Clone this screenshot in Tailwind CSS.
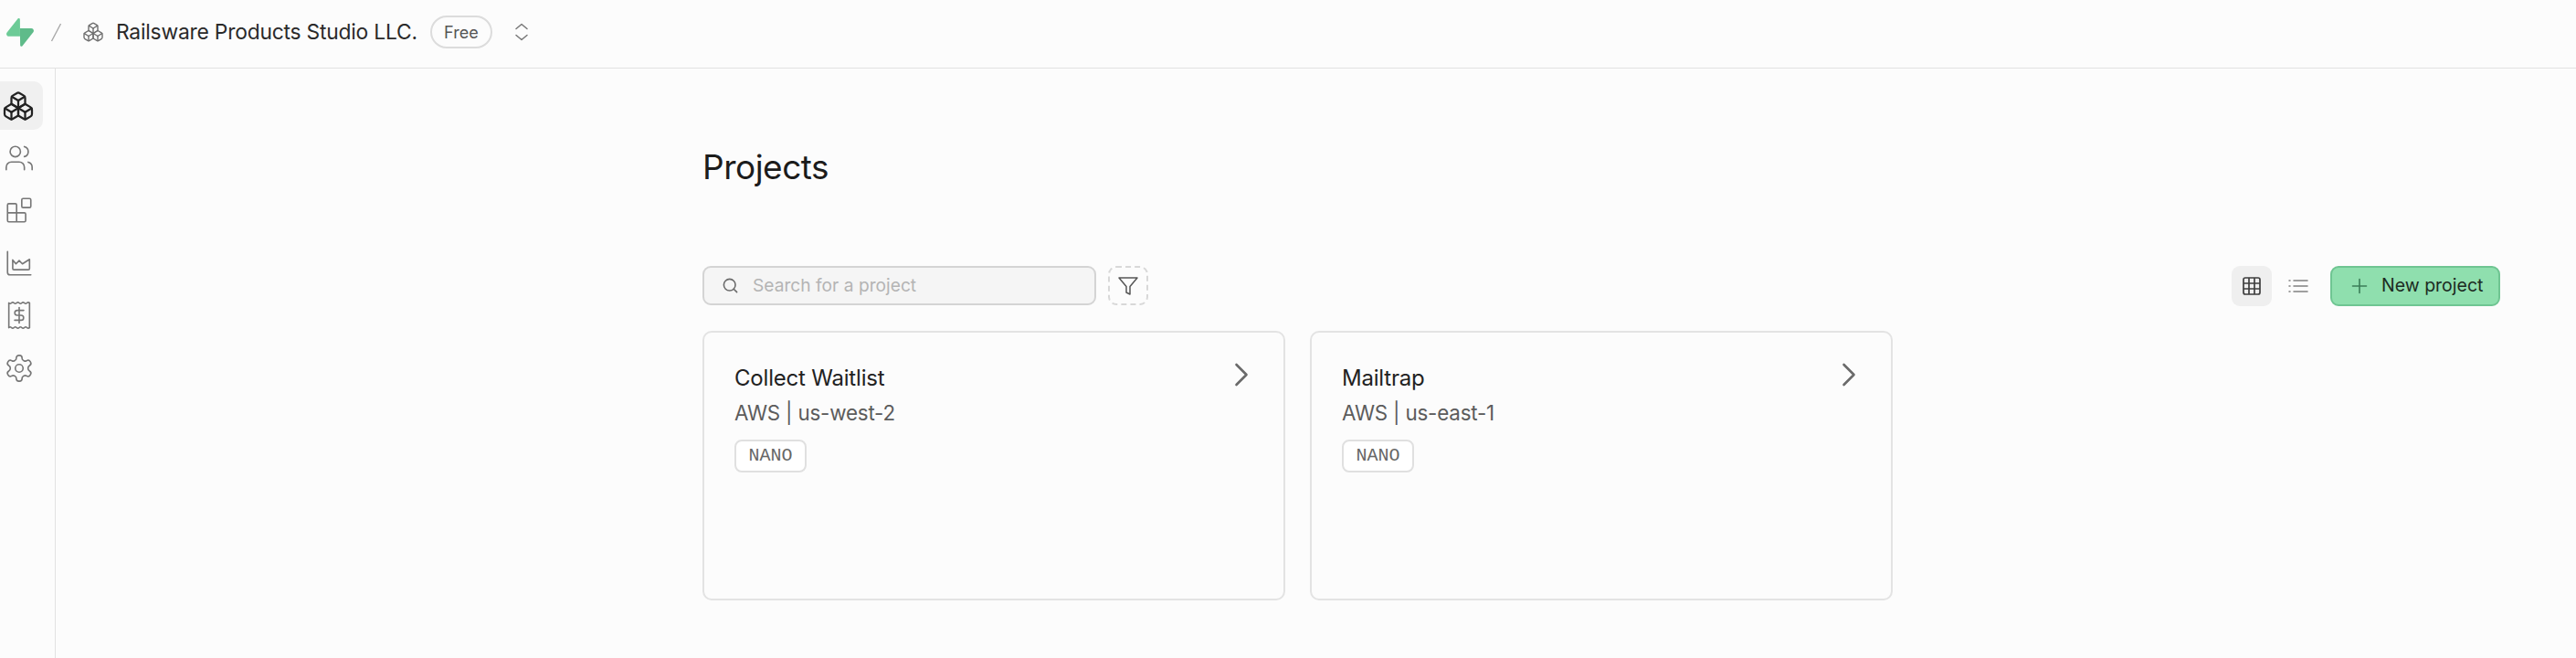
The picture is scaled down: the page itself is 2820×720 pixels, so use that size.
<!DOCTYPE html>
<html lang="en">
<head>
    <meta charset="UTF-8">
    <title>Projects</title>
    <script src="https://cdn.jsdelivr.net/npm/@tailwindcss/browser@4"></script>
</head>
<body class="bg-[#fcfcfc] h-[720px] overflow-hidden font-['Inter',sans-serif] text-[#1c1c1c]">
    <!-- top bar -->
    <header class="h-[75px] border-b border-[#e2e2e2] flex items-center pl-[7px] pb-[4px]">
        <svg class="w-[30px] h-[31px] shrink-0" viewBox="0 0 109 113" fill="none">
            <path d="M63.7076 110.284C60.8481 113.885 55.0502 111.912 54.9813 107.314L53.9738 40.0627L99.1935 40.0627C107.384 40.0627 111.952 49.5228 106.859 55.9374L63.7076 110.284Z" fill="#5fbb8a"/>
            <path d="M45.317 2.07103C48.1765 -1.53037 53.9745 0.442937 54.0434 5.041L54.4849 72.2922H9.83113C1.64038 72.2922 -2.92775 62.8321 2.1655 56.4175L45.317 2.07103Z" fill="#6dcb97"/>
        </svg>
        <span class="ml-[18px] w-[13px] h-[21px] shrink-0">
            <svg class="w-full h-full" viewBox="0 0 13 21" fill="none" stroke="#a8a8a8" stroke-width="1.4"><path d="M11.5 1 1.5 20"/></svg>
        </span>
        <svg class="ml-[22px] w-[24px] h-[24px] shrink-0" viewBox="0 0 24 24" fill="none" stroke="#6f6f6f" stroke-width="1.4" stroke-linecap="round" stroke-linejoin="round">
            <path d="M2.97 12.92A2 2 0 0 0 2 14.63v3.24a2 2 0 0 0 .97 1.71l3 1.8a2 2 0 0 0 2.06 0L12 19v-5.5l-5-3-4.03 2.42Z"/><path d="m7 16.5-4.74-2.85"/><path d="m7 16.5 5-3"/><path d="M7 16.5v5.17"/><path d="M12 13.5V19l3.97 2.38a2 2 0 0 0 2.06 0l3-1.8a2 2 0 0 0 .97-1.71v-3.24a2 2 0 0 0-.97-1.71L17 10.5l-5 3Z"/><path d="m17 16.5-5-3"/><path d="m17 16.5 4.74-2.85"/><path d="M17 16.5v5.17"/><path d="M7.97 4.42A2 2 0 0 0 7 6.13v4.37l5 3 5-3V6.13a2 2 0 0 0-.97-1.71l-3-1.8a2 2 0 0 0-2.06 0l-3 1.8Z"/><path d="M12 8 7.26 5.15"/><path d="m12 8 4.74-2.85"/><path d="M12 13.5V8"/>
        </svg>
        <span class="ml-[13px] text-[22.8px] tracking-[-0.2px] text-[#2a2a2a] whitespace-nowrap">Railsware Products Studio LLC.</span>
        <span class="ml-[14px] w-[68px] h-[36px] rounded-full border-2 border-[#dcdcdc] flex items-center justify-center text-[18px] text-[#555555]">Free</span>
        <svg class="ml-[24px] w-[16px] h-[20px]" viewBox="0 0 16 20" fill="none" stroke="#777777" stroke-width="1.5" stroke-linecap="round" stroke-linejoin="round"><path d="M2 6.5 8 1.5l6 5"/><path d="M2 13.5l6 5 6-5"/></svg>
    </header>

    <div class="flex h-[645px]">
        <!-- sidebar -->
        <aside class="w-[61px] shrink-0 border-r border-[#e2e2e2] pt-[14px] flex flex-col gap-[4px]">
            <a class="w-[47px] h-[53px] bg-[#f0f0f0] rounded-r-[10px] flex items-center justify-center pr-[7px]">
                <svg class="w-[36px] h-[36px]" viewBox="0 0 24 24" fill="none" stroke="#222222" stroke-width="1.5" stroke-linecap="round" stroke-linejoin="round">
                    <path d="M2.97 12.92A2 2 0 0 0 2 14.63v3.24a2 2 0 0 0 .97 1.71l3 1.8a2 2 0 0 0 2.06 0L12 19v-5.5l-5-3-4.03 2.42Z"/><path d="m7 16.5-4.74-2.85"/><path d="m7 16.5 5-3"/><path d="M7 16.5v5.17"/><path d="M12 13.5V19l3.97 2.38a2 2 0 0 0 2.06 0l3-1.8a2 2 0 0 0 .97-1.71v-3.24a2 2 0 0 0-.97-1.71L17 10.5l-5 3Z"/><path d="m17 16.5-5-3"/><path d="m17 16.5 4.74-2.85"/><path d="M17 16.5v5.17"/><path d="M7.97 4.42A2 2 0 0 0 7 6.13v4.37l5 3 5-3V6.13a2 2 0 0 0-.97-1.71l-3-1.8a2 2 0 0 0-2.06 0l-3 1.8Z"/><path d="M12 8 7.26 5.15"/><path d="m12 8 4.74-2.85"/><path d="M12 13.5V8"/>
                </svg>
            </a>
            <a class="w-[47px] h-[53.5px] flex items-center justify-center pr-[6px]">
                <svg class="w-[34px] h-[34px]" viewBox="0 0 24 24" fill="none" stroke="#777777" stroke-width="1.15" stroke-linecap="round" stroke-linejoin="round"><path d="M16 21v-2a4 4 0 0 0-4-4H6a4 4 0 0 0-4 4v2"/><circle cx="9" cy="7" r="4"/><path d="M22 21v-2a4 4 0 0 0-3-3.87"/><path d="M16 3.13a4 4 0 0 1 0 7.75"/></svg>
            </a>
            <a class="w-[47px] h-[53.5px] flex items-center justify-center pr-[6px]">
                <svg class="w-[34px] h-[34px]" viewBox="0 0 24 24" fill="none" stroke="#777777" stroke-width="1.15" stroke-linecap="round" stroke-linejoin="round"><rect x="14" y="3" width="7" height="7" rx="1"/><path d="M10 21V8a1 1 0 0 0-1-1H4a1 1 0 0 0-1 1v12a1 1 0 0 0 1 1h12a1 1 0 0 0 1-1v-5a1 1 0 0 0-1-1H3"/></svg>
            </a>
            <a class="w-[47px] h-[53.5px] flex items-center justify-center pr-[6px]">
                <svg class="w-[34px] h-[34px]" viewBox="0 0 24 24" fill="none" stroke="#777777" stroke-width="1.15" stroke-linecap="round" stroke-linejoin="round"><path d="M3 3v16a2 2 0 0 0 2 2h16"/><path d="M7 9.5V16a1 1 0 0 0 1 1h11a1 1 0 0 0 1-1V9l-5.5 3.5L12 10l-2.5 2.5z"/></svg>
            </a>
            <a class="w-[47px] h-[53.5px] flex items-center justify-center pr-[6px]">
                <svg class="w-[34px] h-[34px]" viewBox="0 0 24 24" fill="none" stroke="#777777" stroke-width="1.15" stroke-linecap="round" stroke-linejoin="round"><path d="M4 2.5v19M20 2.5v19"/><path d="M4 2.5q1 1 2 0t2 0 2 0 2 0 2 0 2 0 2 0 2 0"/><path d="M4 21.5q1-1 2 0t2 0 2 0 2 0 2 0 2 0 2 0 2 0"/><path d="M12 6v12"/><path d="M15.5 8.2h-5a1.9 1.9 0 0 0 0 3.8h3a1.9 1.9 0 0 1 0 3.8h-5"/></svg>
            </a>
            <a class="w-[47px] h-[53.5px] flex items-center justify-center pr-[6px]">
                <svg class="w-[34px] h-[34px]" viewBox="0 0 24 24" fill="none" stroke="#777777" stroke-width="1.15" stroke-linecap="round" stroke-linejoin="round"><path d="M12.22 2h-.44a2 2 0 0 0-2 2v.18a2 2 0 0 1-1 1.73l-.43.25a2 2 0 0 1-2 0l-.15-.08a2 2 0 0 0-2.73.73l-.22.38a2 2 0 0 0 .73 2.73l.15.1a2 2 0 0 1 1 1.72v.51a2 2 0 0 1-1 1.74l-.15.09a2 2 0 0 0-.73 2.73l.22.38a2 2 0 0 0 2.73.73l.15-.08a2 2 0 0 1 2 0l.43.25a2 2 0 0 1 1 1.73V20a2 2 0 0 0 2 2h.44a2 2 0 0 0 2-2v-.18a2 2 0 0 1 1-1.73l.43-.25a2 2 0 0 1 2 0l.15.08a2 2 0 0 0 2.73-.73l.22-.39a2 2 0 0 0-.73-2.73l-.15-.08a2 2 0 0 1-1-1.74v-.5a2 2 0 0 1 1-1.74l.15-.09a2 2 0 0 0 .73-2.73l-.22-.38a2 2 0 0 0-2.73-.73l-.15.08a2 2 0 0 1-2 0l-.43-.25a2 2 0 0 1-1-1.73V4a2 2 0 0 0-2-2z"/><circle cx="12" cy="12" r="3"/></svg>
            </a>
        </aside>

        <!-- main -->
        <main class="flex-1 pl-[708px] pr-[83px] pt-[85px]">
            <h1 class="text-[37px] leading-[46px] tracking-[-0.5px] text-[#1c1c1c] mb-[85px]">Projects</h1>

            <div class="flex items-center h-[43px] mb-[28px]">
                <div class="w-[431px] h-[43px] rounded-[9px] border-2 border-[#d4d4d4] bg-[#f5f5f5] flex items-center pl-[19px]">
                    <svg class="w-[19px] h-[19px]" viewBox="0 0 24 24" fill="none" stroke="#6a6a6a" stroke-width="2" stroke-linecap="round" stroke-linejoin="round"><circle cx="11" cy="11" r="8"/><path d="m21 21-4.3-4.3"/></svg>
                    <span class="ml-[15px] text-[19.2px] text-[#b4b4b4]">Search for a project</span>
                </div>
                <div class="ml-[13px] w-[44px] h-[43px] rounded-[9px] border-2 border-dashed border-[#d8d8d8] flex items-center justify-center">
                    <svg class="w-[24px] h-[24px]" viewBox="0 0 24 24" fill="none" stroke="#555555" stroke-width="1.5" stroke-linecap="round" stroke-linejoin="round"><polygon points="22 3 2 3 10 12.46 10 19 14 21 14 12.46 22 3"/></svg>
                </div>
                <div class="ml-auto w-[44px] h-[44px] rounded-[9px] bg-[#efefef] flex items-center justify-center">
                    <svg class="w-[22px] h-[22px]" viewBox="0 0 22 22" fill="none" stroke="#3f3f3f" stroke-width="1.7"><rect x="2" y="2" width="18" height="18" rx="2"/><path d="M8 2v18M14 2v18M2 8h18M2 14h18"/></svg>
                </div>
                <div class="ml-[17px] w-[24px] h-[24px]">
                    <svg class="w-full h-full" viewBox="0 0 24 24" fill="none" stroke="#808080" stroke-width="1.5" stroke-linecap="round"><path d="M7 6h15M7 12h15M7 18h15"/><path d="M2 6h1M2 12h1M2 18h1"/></svg>
                </div>
                <button class="ml-[23px] w-[186px] h-[44px] rounded-[9px] bg-[#8fdfae] border-2 border-[#6fc592] flex items-center pl-[21px] text-[#1c2b22]">
                    <svg class="w-[18px] h-[18px]" viewBox="0 0 18 18" fill="none" stroke="#3b7d58" stroke-width="1.6" stroke-linecap="round"><path d="M1.5 9h15M9 1.5v15"/></svg>
                    <span class="ml-[15px] text-[19.5px] whitespace-nowrap">New project</span>
                </button>
            </div>

            <div class="grid grid-cols-[638px_638px] gap-[27px]">
                <div class="h-[295px] rounded-[10px] border-2 border-[#e3e3e3] pl-[33px] pr-[38px] pt-[36px]">
                    <div class="flex items-start justify-between">
                        <div class="text-[24px] leading-[28px] tracking-[-0.2px] text-[#222222]">Collect Waitlist</div>
                        <svg class="w-[16px] h-[26px] -mt-[3px]" viewBox="0 0 16 26" fill="none" stroke="#6a6a6a" stroke-width="2.6" stroke-linecap="round" stroke-linejoin="round"><path d="M2.5 2 13.5 13 2.5 24"/></svg>
                    </div>
                    <div class="mt-[10px] text-[22.4px] leading-[28px] tracking-[-0.2px] text-[#5c5c5c]">AWS | us-west-2</div>
                    <div class="mt-[15px] w-[79px] h-[36px] rounded-[8px] border-2 border-[#e0e0e0] bg-white flex items-center justify-center font-['Liberation_Mono',monospace] text-[20px] text-[#666666]">NANO</div>
                </div>
                <div class="h-[295px] rounded-[10px] border-2 border-[#e3e3e3] pl-[33px] pr-[38px] pt-[36px]">
                    <div class="flex items-start justify-between">
                        <div class="text-[24px] leading-[28px] tracking-[-0.2px] text-[#222222]">Mailtrap</div>
                        <svg class="w-[16px] h-[26px] -mt-[3px]" viewBox="0 0 16 26" fill="none" stroke="#6a6a6a" stroke-width="2.6" stroke-linecap="round" stroke-linejoin="round"><path d="M2.5 2 13.5 13 2.5 24"/></svg>
                    </div>
                    <div class="mt-[10px] text-[22.4px] leading-[28px] tracking-[-0.2px] text-[#5c5c5c]">AWS | us-east-1</div>
                    <div class="mt-[15px] w-[79px] h-[36px] rounded-[8px] border-2 border-[#e0e0e0] bg-white flex items-center justify-center font-['Liberation_Mono',monospace] text-[20px] text-[#666666]">NANO</div>
                </div>
            </div>
        </main>
    </div>
</body>
</html>
